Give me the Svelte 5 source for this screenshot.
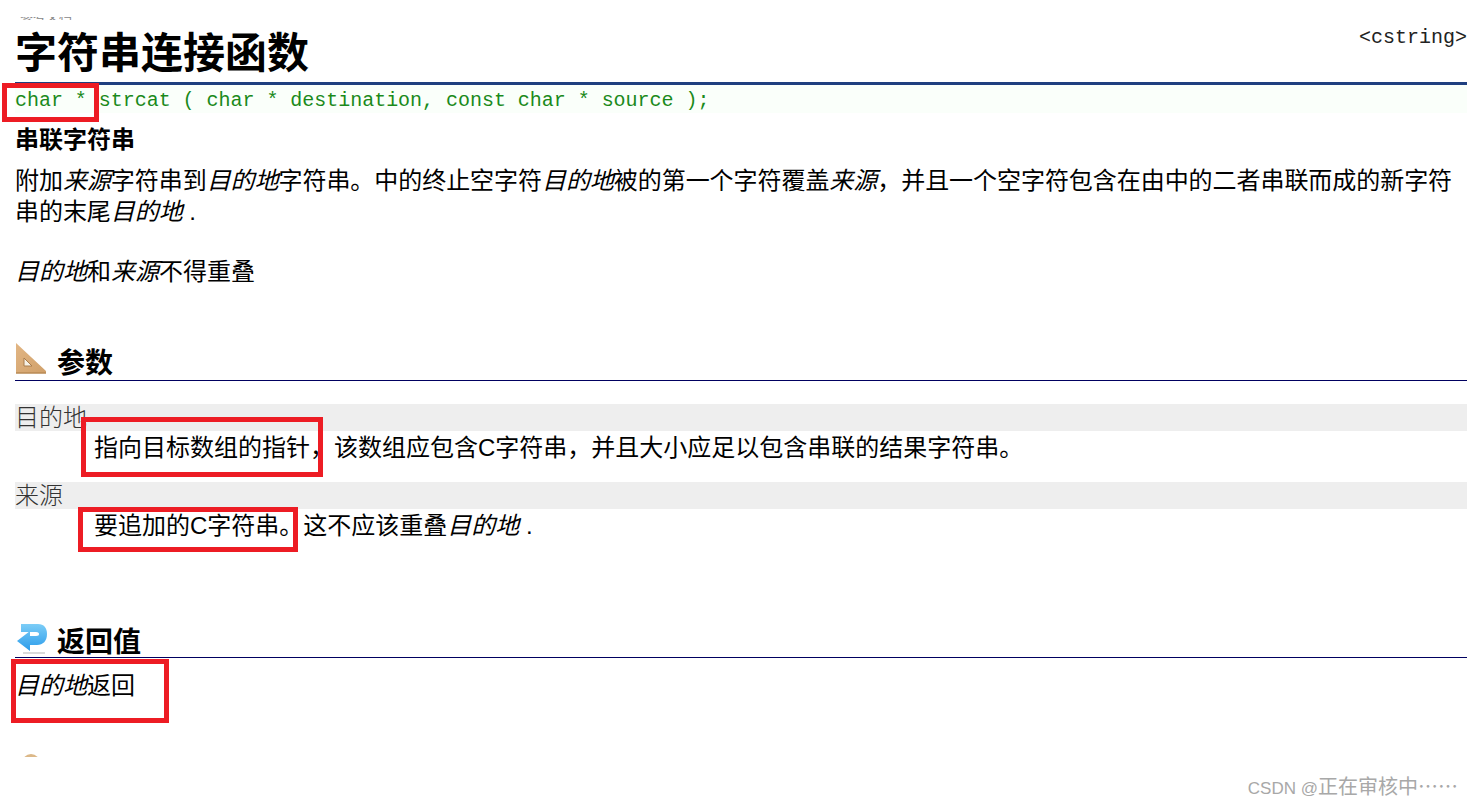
<script lang="ts">
    const params = [
        { name: "目的地", isDest: true },
        { name: "来源", isDest: false }
    ];
</script>

<div class="page">
    <div class="crumb"><span>参考文档</span></div>
    <div class="title-row">
        <h1>字符串连接函数</h1>
        <span class="header-lib">&lt;cstring&gt;</span>
    </div>
    <div class="proto">char * strcat ( char * destination, const char * source );</div>
    <div class="subtitle">串联字符串</div>
    <p class="desc">附加<i>来源</i>字符串到<i>目的地</i>字符串。中的终止空字符<i>目的地</i>被的第一个字符覆盖<i>来源</i>，并且一个空字符包含在由中的二者串联而成的新字符串的末尾<i>目的地</i> .</p>
    <p class="note"><i>目的地</i>和<i>来源</i>不得重叠</p>

    <h2 class="section first">
        <svg class="icon" viewBox="0 0 32 32" aria-hidden="true">
            <defs>
                <linearGradient id="wood" x1="0" y1="0" x2="1" y2="1">
                    <stop offset="0" stop-color="#e2b684" />
                    <stop offset="1" stop-color="#d0a06a" />
                </linearGradient>
            </defs>
            <path d="M1 1 L31 29 L31 31 L1 31 Z M9 16 L9 24 L17 24 Z" fill="url(#wood)" fill-rule="evenodd" />
            <path d="M1 31 H31" stroke="#b98a55" stroke-width="1.5" />
            <path d="M9 16 L9 24 L17 24 Z" fill="#f6f1e6" stroke="#a97c4c" stroke-width="1" />
        </svg>
        参数
    </h2>
    <dl>
        {#each params as p}
            <dt>{p.name}</dt>
            {#if p.isDest}
                <dd>指向目标数组的指针，该数组应包含C字符串，并且大小应足以包含串联的结果字符串。</dd>
            {:else}
                <dd>要追加的C字符串。这不应该重叠<i>目的地</i> .</dd>
            {/if}
        {/each}
    </dl>

    <h2 class="section second">
        <svg class="icon" viewBox="0 0 32 32" aria-hidden="true">
            <defs>
                <linearGradient id="arrow" x1="0" y1="0" x2="0" y2="1">
                    <stop offset="0" stop-color="#7ccdf7" />
                    <stop offset="1" stop-color="#2a9bea" />
                </linearGradient>
            </defs>
            <path d="M6 2 H23 C29 2 32 6 32 12 C32 19 28 23 22 23 H15 V29 L2 19 L15 9 V14 H21 C23.5 14 24 13 24 12 C24 11 23.5 10 21 10 H6 Z" fill="url(#arrow)" />
            <path d="M8 31 H30" stroke="#d9d9d9" stroke-width="2" />
        </svg>
        返回值
    </h2>
    <p class="returns"><i>目的地</i>返回</p>
    <div class="next-icon"></div>

    <div class="mark m1"></div>
    <div class="mark m2"></div>
    <div class="mark m3"></div>
    <div class="mark m4"></div>
</div>
<div class="watermark"><span class="latin">CSDN @</span>正在审核中<span class="dots">……</span></div>

<style>
    :global(body) {
        margin: 0;
        background: #fff;
        font-family: "Liberation Sans", "Noto Sans CJK SC", sans-serif;
        color: #000;
    }

    .page {
        position: relative;
        height: 757px;
        overflow: hidden;
        padding: 17px 5px 0 15px;
        box-sizing: border-box;
        font-size: 24px;
    }

    .crumb {
        height: 3px;
        overflow: hidden;
        display: flex;
        align-items: flex-end;
        padding-left: 5px;
        font-size: 13px;
        line-height: 9px;
        color: #888;
    }

    .title-row {
        display: flex;
        justify-content: space-between;
        align-items: flex-start;
        height: 62px;
        border-bottom: 3px solid #1f3f7f;
    }

    h1 {
        margin: 5px 0 0;
        font-size: 42px;
        line-height: 58px;
        font-weight: 700;
    }

    .header-lib {
        font-family: "Liberation Mono", monospace;
        font-size: 20px;
        line-height: 30px;
        margin-top: 3px;
        color: #222;
    }

    .proto {
        font-family: "Liberation Mono", monospace;
        font-size: 20px;
        line-height: 28px;
        letter-spacing: -0.03px;
        padding-top: 2px;
        height: 26px;
        color: #1a8a1a;
        background: #fafffa;
    }

    .subtitle {
        font-weight: 700;
        line-height: 31px;
        margin-top: 11px;
    }

    p {
        margin: 0;
        line-height: 31px;
    }

    .desc {
        margin-top: 10px;
        letter-spacing: -0.05px;
    }

    .note {
        margin-top: 29px;
    }

    .section {
        margin: 0;
        display: flex;
        align-items: flex-end;
        gap: 10px;
        font-size: 28px;
        line-height: 32px;
        font-weight: 700;
        border-bottom: 1px solid #000060;
    }

    .section.first {
        margin-top: 55px;
    }

    .section.second {
        margin-top: 79px;
        line-height: 28px;
    }

    .icon {
        width: 32px;
        height: 32px;
        flex: none;
    }

    .first .icon {
        margin-bottom: 6px;
    }

    .second .icon {
        margin-bottom: 3px;
    }

    dl {
        margin: 23px 0 0;
    }

    dt {
        background: #eee;
        height: 27px;
        line-height: 27px;
        color: #333;
        font-weight: 300;
    }

    dd {
        margin: 0 0 17px 79px;
        line-height: 34px;
    }

    .returns {
        line-height: 31px;
        margin-top: 12px;
    }

    .next-icon {
        width: 18px;
        height: 18px;
        margin: 53px 0 0 7px;
        border-radius: 50%;
        background: #dcb888;
    }

    .mark {
        position: absolute;
        border: 5px solid #ed1c24;
        box-sizing: border-box;
    }

    .m1 { left: 2px; top: 83px; width: 97px; height: 39px; }
    .m2 { left: 81px; top: 417px; width: 242px; height: 60px; }
    .m3 { left: 78px; top: 507px; width: 220px; height: 45px; }
    .m4 { left: 11px; top: 659px; width: 158px; height: 64px; }

    .watermark {
        position: absolute;
        right: 14px;
        bottom: 5px;
        font-size: 20px;
        line-height: 26px;
        color: #a8a8a8;
    }

    .latin {
        font-size: 17px;
    }

    .dots {
        font-family: "Noto Sans CJK SC", sans-serif;
    }
</style>
